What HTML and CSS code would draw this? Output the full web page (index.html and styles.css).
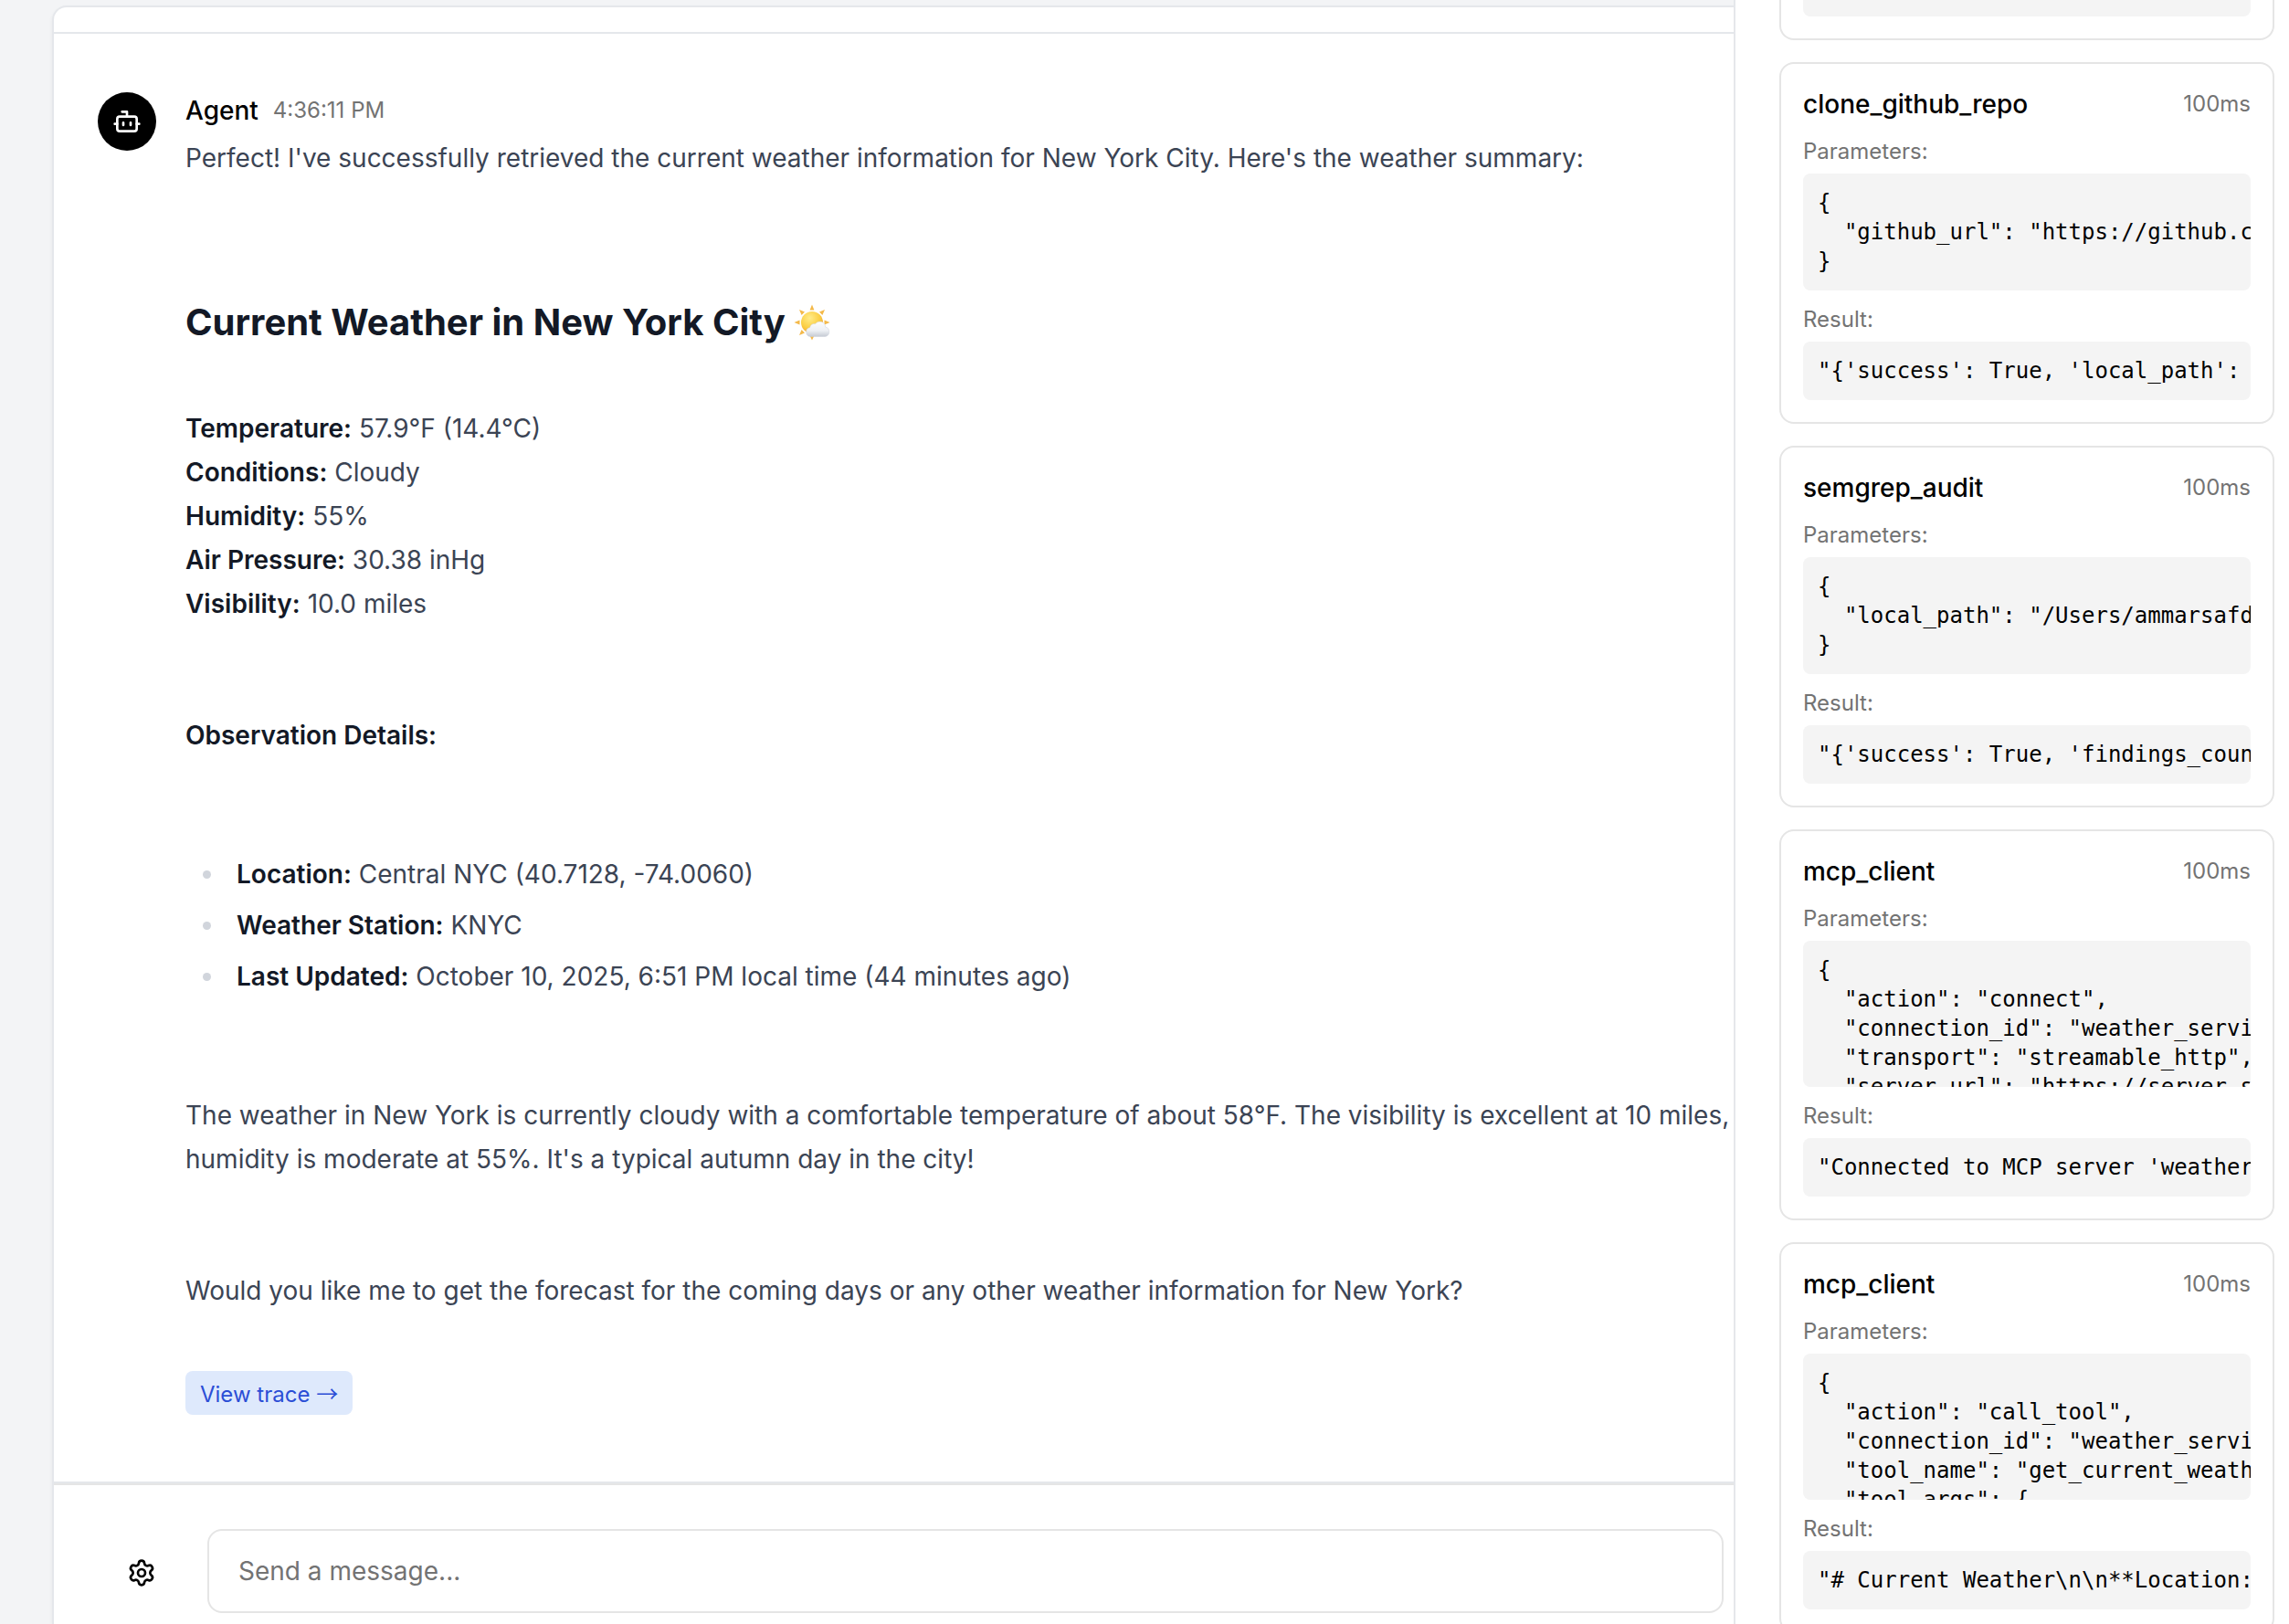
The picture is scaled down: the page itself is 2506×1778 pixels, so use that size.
FILE: index.html
```
<!DOCTYPE html>
<html lang="en">
<head>
<meta charset="UTF-8">
<meta name="viewport" content="width=device-width, initial-scale=1.0">
<title>Agent chat</title>
<link rel="stylesheet" href="styles.css">
</head>
<body>

<main class="chat">
  <div class="panel">
    <header class="panel-header"></header>

    <section class="messages">
      <article class="message">
        <div class="avatar">
          <svg viewBox="0 0 24 24" aria-hidden="true">
            <path d="M12 8V4H8"/>
            <rect width="16" height="12" x="4" y="8" rx="2"/>
            <path d="M2 14h2M20 14h2M15 13v2M9 13v2"/>
          </svg>
        </div>
        <div class="message-body">
          <div class="message-head">
            <span class="author">Agent</span>
            <time class="time">4:36:11 PM</time>
          </div>

          <div class="markdown">
            <p>Perfect! I've successfully retrieved the current weather information for New York City. Here's the weather summary:</p>

            <h2>Current Weather in New York City
              <svg class="emoji" viewBox="0 0 40 40" role="img" aria-label="sun behind small cloud">
                <defs>
                  <radialGradient id="sun" cx="40%" cy="30%" r="75%">
                    <stop offset="0" stop-color="#ffec8a"/>
                    <stop offset="0.6" stop-color="#fbcf45"/>
                    <stop offset="1" stop-color="#f0a030"/>
                  </radialGradient>
                  <linearGradient id="cloud" x1="0" y1="0" x2="0" y2="1">
                    <stop offset="0" stop-color="#fdfdfe"/>
                    <stop offset="0.6" stop-color="#edf0f4"/>
                    <stop offset="1" stop-color="#c5cad3"/>
                  </linearGradient>
                </defs>
                <g fill="#f4b94a">
                  <path d="M20 0.500l2.400 6h-4.800zM20 39.500l2.400-5h-4.800zM0.500 20l6-2.400v4.800zM39.500 20l-6-2.400v4.800z"/>
                  <path d="M6 6l6 2.600-3.400 3.400zM34 6l-6 2.600 3.400 3.400zM6 34l2.600-6 3.400 3.400z"/>
                </g>
                <circle cx="20" cy="20" r="12" fill="url(#sun)"/>
                <path d="M18.500 35.500a5 5 0 0 1-.8-9.900 4.700 4.700 0 0 1 5.800-4 6.200 6.200 0 0 1 11.200 3.500 5.300 5.300 0 0 1-.5 10.400z" fill="url(#cloud)" stroke="#ccd1da" stroke-width="0.500"/>
              </svg>
            </h2>

            <p>
              <strong>Temperature:</strong> 57.9°F (14.4°C)<br>
              <strong>Conditions:</strong> Cloudy<br>
              <strong>Humidity:</strong> 55%<br>
              <strong>Air Pressure:</strong> 30.38 inHg<br>
              <strong>Visibility:</strong> 10.0 miles
            </p>

            <p><strong>Observation Details:</strong></p>

            <ul>
              <li><strong>Location:</strong> Central NYC (40.7128, -74.0060)</li>
              <li><strong>Weather Station:</strong> KNYC</li>
              <li><strong>Last Updated:</strong> October 10, 2025, 6:51 PM local time (44 minutes ago)</li>
            </ul>

            <p>The weather in New York is currently cloudy with a comfortable temperature of about 58°F. The visibility is excellent at 10 miles, humidity is moderate at 55%. It's a typical autumn day in the city!</p>

            <p>Would you like me to get the forecast for the coming days or any other weather information for New York?</p>
          </div>

          <a class="trace" href="#">View trace <span class="arrow">→</span></a>
        </div>
      </article>
    </section>

    <form class="composer">
      <button class="settings" type="button" aria-label="Settings">
        <svg viewBox="0 0 24 24" aria-hidden="true">
          <path d="M9.671 4.136a2.34 2.34 0 0 1 4.659 0 2.34 2.34 0 0 0 3.319 1.915 2.34 2.34 0 0 1 2.33 4.033 2.34 2.34 0 0 0 0 3.831 2.34 2.34 0 0 1-2.33 4.033 2.34 2.34 0 0 0-3.319 1.915 2.34 2.34 0 0 1-4.659 0 2.34 2.34 0 0 0-3.32-1.915 2.34 2.34 0 0 1-2.33-4.033 2.34 2.34 0 0 0 0-3.831A2.34 2.34 0 0 1 6.35 6.051a2.34 2.34 0 0 0 3.319-1.915"/>
          <circle cx="12" cy="12" r="3"/>
        </svg>
      </button>
      <input class="message-input" type="text" placeholder="Send a message..." aria-label="Message">
    </form>
  </div>
</main>

<aside class="tools">
  <section class="card card-scrolled">
    <pre></pre>
  </section>

  <section class="card">
    <div class="card-head">
      <h3>clone_github_repo</h3>
      <span class="duration">100ms</span>
    </div>
    <div class="label">Parameters:</div>
    <pre>{
  "github_url": "https://github.com/"
}</pre>
    <div class="label">Result:</div>
    <pre>"{'success': True, 'local_path': '/Users/</pre>
  </section>

  <section class="card">
    <div class="card-head">
      <h3>semgrep_audit</h3>
      <span class="duration">100ms</span>
    </div>
    <div class="label">Parameters:</div>
    <pre>{
  "local_path": "/Users/ammarsafdar"
}</pre>
    <div class="label">Result:</div>
    <pre>"{'success': True, 'findings_count': 0}"</pre>
  </section>

  <section class="card">
    <div class="card-head">
      <h3>mcp_client</h3>
      <span class="duration">100ms</span>
    </div>
    <div class="label">Parameters:</div>
    <pre>{
  "action": "connect",
  "connection_id": "weather_service",
  "transport": "streamable_http",
  "server_url": "https://server.smithery.ai"
}</pre>
    <div class="label">Result:</div>
    <pre>"Connected to MCP server 'weather_service'"</pre>
  </section>

  <section class="card">
    <div class="card-head">
      <h3>mcp_client</h3>
      <span class="duration">100ms</span>
    </div>
    <div class="label">Parameters:</div>
    <pre>{
  "action": "call_tool",
  "connection_id": "weather_service",
  "tool_name": "get_current_weather",
  "tool_args": {
  }
}</pre>
    <div class="label">Result:</div>
    <pre>"# Current Weather\n\n**Location:** Central NYC"</pre>
  </section>
</aside>

</body>
</html>
```
FILE: styles.css
```
* {
  box-sizing: border-box;
  margin: 0;
  padding: 0;
}

body {
  display: flex;
  height: 100vh;
  overflow: hidden;
  background: #f3f4f6;
  color: #000;
  font-family: Inter, "Liberation Sans", sans-serif;
  font-size: 28px;
  line-height: 40px;
}

svg {
  width: 32px;
  height: 32px;
}

.avatar svg,
.settings svg {
  fill: none;
  stroke: currentColor;
  stroke-width: 2;
  stroke-linecap: round;
  stroke-linejoin: round;
}

/* chat */

.chat {
  display: flex;
  flex: 1;
  min-width: 0;
  padding: 6px 0 0 57px;
}

.panel {
  display: flex;
  flex: 1;
  flex-direction: column;
  min-width: 0;
  background: #fff;
  border: 2px solid #e5e7eb;
  border-width: 2px 0 0 2px;
  border-radius: 16px 0 0 0;
  box-shadow: 0 2px 4px rgba(0, 0, 0, 0.05);
}

.panel-header {
  height: 29px;
  border-bottom: 2px solid #e5e7eb;
}

.messages {
  padding: 64px 0 73px 48px;
  border-bottom: 2px solid #e5e7eb;
}

.message {
  display: flex;
  gap: 32px;
}

.avatar {
  display: flex;
  flex: none;
  align-items: center;
  justify-content: center;
  width: 64px;
  height: 64px;
  border-radius: 50%;
  background: #000;
  color: #fff;
}

.message-body {
  flex: 1;
  min-width: 0;
}

.message-head {
  display: flex;
  align-items: center;
  gap: 16px;
  margin-bottom: 8px;
}

.author {
  font-weight: 500;
}

.time {
  color: #737373;
  font-size: 24px;
  line-height: 32px;
}

.markdown {
  margin-bottom: 64px;
  color: #3b4454;
  line-height: 48px;
}

.markdown p + p {
  margin-top: 96px;
}

.markdown h2 {
  margin: 128px 0 64px;
  color: #131926;
  font-size: 40px;
  font-weight: 700;
  line-height: 56px;
}

.markdown strong {
  color: #131926;
  font-weight: 600;
}

.markdown ul {
  margin: 104px 0;
  padding-left: 44px;
}

.markdown li {
  padding-left: 12px;
}

.markdown li + li {
  margin-top: 8px;
}

.markdown li::marker {
  color: #d1d5dc;
}

.emoji {
  width: 40px;
  height: 40px;
  vertical-align: -6px;
}

.trace {
  display: inline-block;
  height: 48px;
  padding: 8px 16px;
  border-radius: 8px;
  background: #dee9fc;
  color: #2b4ed6;
  font-size: 24px;
  line-height: 32px;
  text-decoration: none;
  vertical-align: top;
}

.arrow {
  font-family: "Noto Sans CJK SC", sans-serif;
}

/* message box */

.composer {
  display: flex;
  flex: 1;
  align-items: flex-start;
  gap: 24px;
  padding: 48px 11px 0 48px;
  border-top: 2px solid #e5e5e5;
}

.settings {
  display: flex;
  flex: none;
  align-items: center;
  justify-content: center;
  width: 96px;
  height: 96px;
  border: 0;
  background: none;
  color: #000;
}

.message-input {
  flex: 1;
  min-width: 0;
  height: 92px;
  padding: 0 32px;
  border: 2px solid #e5e5e5;
  border-radius: 16px;
  background: #fff;
  font: inherit;
}

.message-input::placeholder {
  color: #737373;
}

/* tool calls */

.tools {
  display: flex;
  flex: none;
  flex-direction: column;
  gap: 24px;
  width: 608px;
  padding: 0 16px 0 48px;
  border-left: 2px solid #e5e7eb;
  background: #fff;
}

.card {
  flex: none;
  padding: 24px;
  border: 2px solid #e5e5e5;
  border-radius: 16px;
}

.card-scrolled {
  padding-top: 0;
  border-top: 0;
  border-radius: 0 0 16px 16px;
}

.card-head {
  display: flex;
  align-items: center;
  justify-content: space-between;
}

.card h3 {
  font-size: 28px;
  font-weight: 500;
}

.duration,
.label {
  color: #737373;
  font-size: 24px;
  line-height: 32px;
}

.label {
  margin: 16px 0 8px;
}

.card pre {
  max-height: 160px;
  padding: 16px;
  overflow: hidden;
  border-radius: 8px;
  background: #f4f4f4;
  font-family: "DejaVu Sans Mono", monospace;
  font-size: 24px;
  line-height: 32px;
}

.card-scrolled pre {
  height: 18px;
  padding: 0;
  border-radius: 0 0 8px 8px;
}
```
